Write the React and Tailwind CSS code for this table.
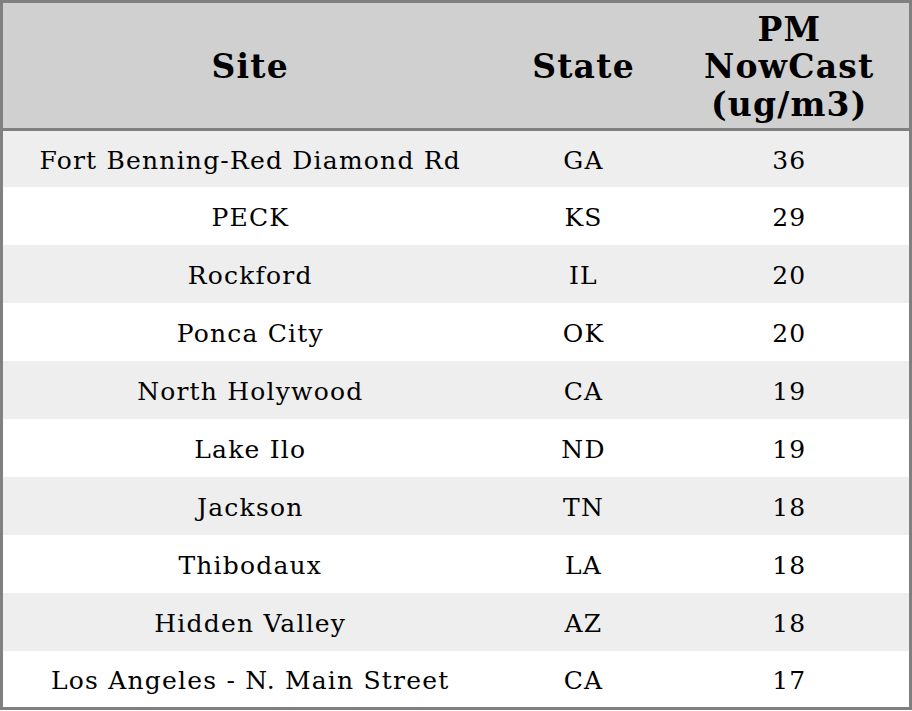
const rows = [
  ['Fort Benning-Red Diamond Rd', 'GA', 36],
  ['PECK', 'KS', 29],
  ['Rockford', 'IL', 20],
  ['Ponca City', 'OK', 20],
  ['North Holywood', 'CA', 19],
  ['Lake Ilo', 'ND', 19],
  ['Jackson', 'TN', 18],
  ['Thibodaux', 'LA', 18],
  ['Hidden Valley', 'AZ', 18],
  ['Los Angeles - N. Main Street', 'CA', 17],
];

export default function App() {
  return (
    <div className="w-[912px] h-[711px] bg-white font-['DejaVu_Serif',serif] text-black overflow-hidden">
      <table className="w-[912px] border-collapse border-[3px] border-[#808080] table-fixed">
        <thead>
          <tr className="bg-[#d0d0d0] h-[128px] border-b-[3px] border-[#808080] text-[33px] font-bold leading-[37.5px] tracking-[1.2px]">
            <th className="w-[496px] text-center pt-[3px]">Site</th>
            <th className="w-[172px] text-center pt-[3px]">State</th>
            <th className="text-center pt-[3px]">
              PM
              <br />
              NowCast
              <br />
              (ug/m3)
            </th>
          </tr>
        </thead>
        <tbody>
          {rows.map(([site, state, value], i) => (
            <tr
              key={site}
              className={`${i % 2 === 0 ? 'bg-[#eeeeee]' : 'bg-white'} ${i === 0 ? 'h-[57px]' : 'h-[58px]'} text-[25px] tracking-[1.2px]`}
            >
              <td className="text-center pt-[4px]">{site}</td>
              <td className="text-center pt-[4px]">{state}</td>
              <td className="text-center pt-[4px]">{value}</td>
            </tr>
          ))}
        </tbody>
      </table>
    </div>
  );
}
